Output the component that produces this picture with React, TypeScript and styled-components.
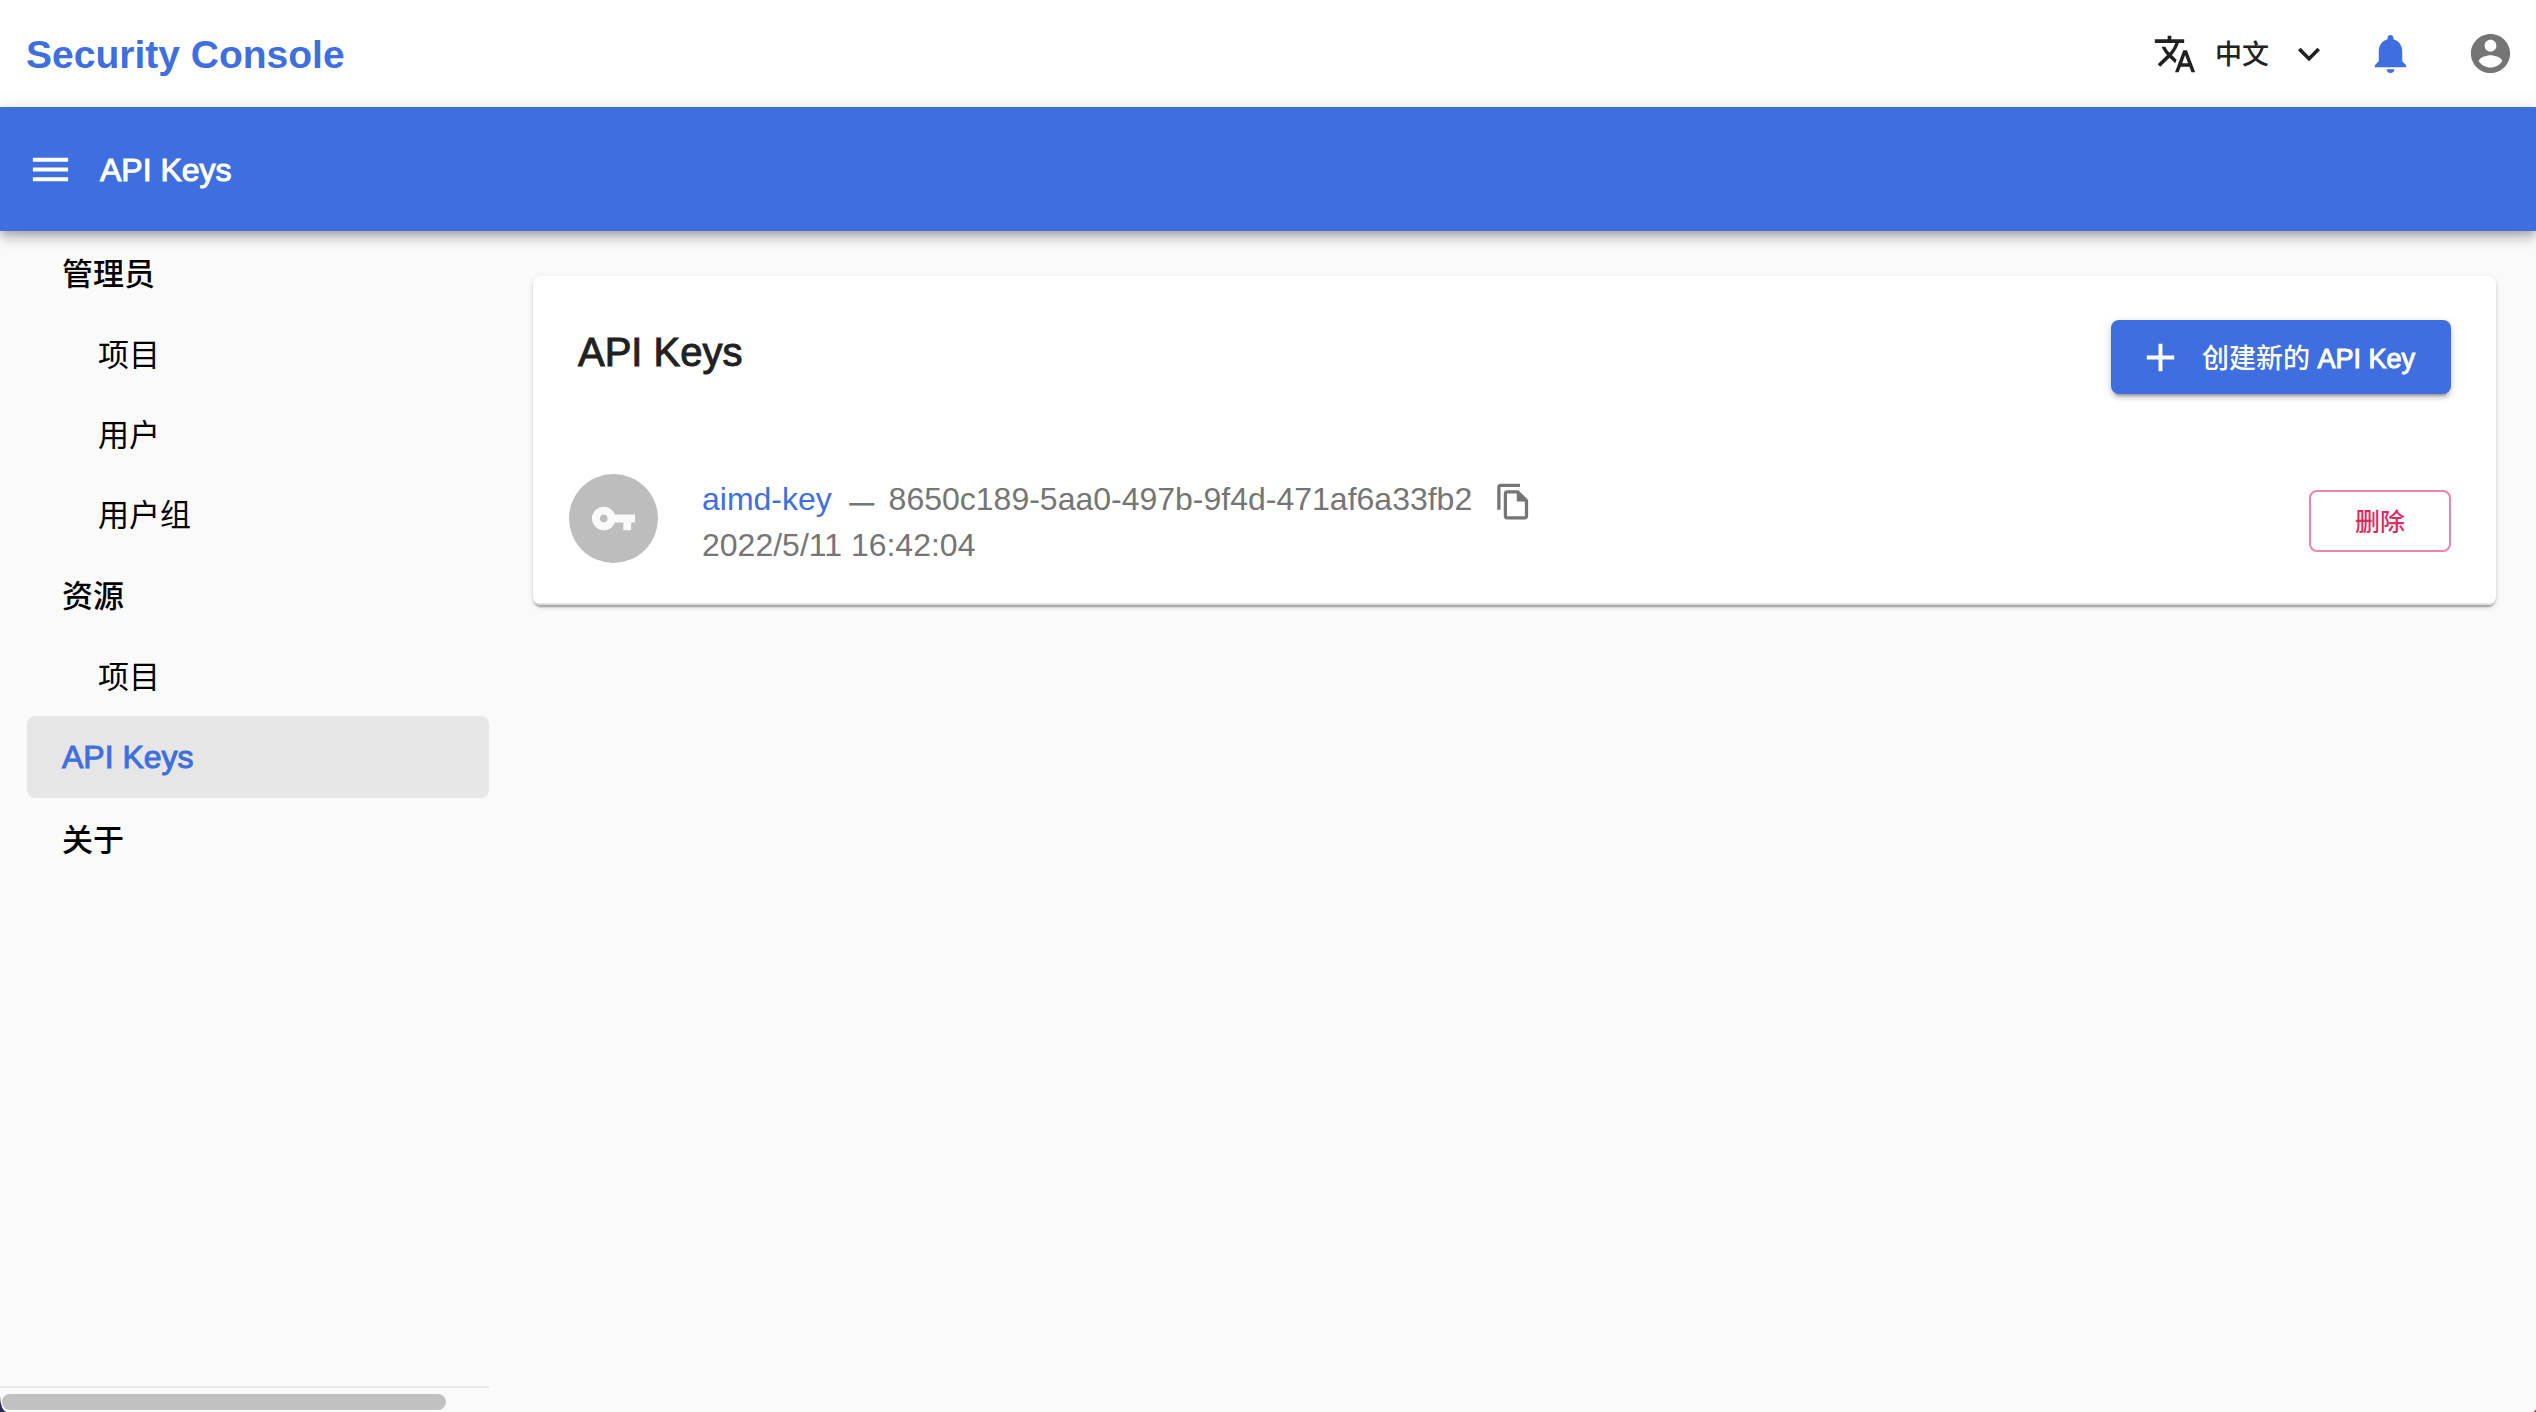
import React from "react";
import styled, { createGlobalStyle } from "styled-components";

const colors = {
  primary: "#3f6fde",
  danger: "#de2b5f",
  dangerBorder: "#ec87a8",
  page: "#fafafa",
  text: "#212121",
  muted: "#757575",
};

const GlobalStyle = createGlobalStyle`
  *, *::before, *::after { box-sizing: border-box; }
  body {
    margin: 0;
    background: linear-gradient(90deg, #2d2a55 50%, #7b2450 50%);
    font-family: "Liberation Sans", Helvetica, Arial, "Noto Sans CJK SC", sans-serif;
    color: ${colors.text};
  }
  button { font-family: inherit; cursor: pointer; }
  a { text-decoration: none; }
`;

const Page = styled.div`
  display: flex;
  flex-direction: column;
  min-height: 100vh;
  background: ${colors.page};
  border-bottom-left-radius: 7px 16px;
  border-bottom-right-radius: 4px;
  overflow: hidden;
`;

const Header = styled.header`
  display: flex;
  align-items: center;
  justify-content: space-between;
  height: 107px;
  padding: 0 22px 0 26px;
  background: #fff;
`;

const Brand = styled.a`
  padding-top: 2px;
  color: ${colors.primary};
  font-size: 39px;
  font-weight: 700;
  line-height: 64px;
`;

const HeaderActions = styled.div`
  display: flex;
  align-items: center;
`;

const LanguageButton = styled.button`
  display: flex;
  align-items: center;
  gap: 18px;
  margin-right: 36px;
  padding: 0;
  border: 0;
  background: none;
  color: ${colors.text};
  font-size: 27px;
  font-weight: 500;
  line-height: 46px;
`;

const LanguageLabel = styled.span`
  padding-top: 2px;
`;

const IconButton = styled.button<{ $color: string; $end?: number }>`
  display: flex;
  margin-right: ${(p) => p.$end ?? 0}px;
  padding: 0;
  border: 0;
  background: none;
  color: ${(p) => p.$color};
`;

const Svg = styled.svg<{ $size: number }>`
  display: block;
  flex: none;
  width: ${(p) => p.$size}px;
  height: ${(p) => p.$size}px;
  fill: currentColor;
`;

const AppBar = styled.div`
  position: relative;
  z-index: 1;
  display: flex;
  align-items: center;
  gap: 26px;
  height: 124px;
  padding: 0 27px;
  background: ${colors.primary};
  color: #fff;
  box-shadow: 0 4px 8px -2px rgba(0, 0, 0, 0.2), 0 8px 10px 0 rgba(0, 0, 0, 0.14),
    0 2px 20px 0 rgba(0, 0, 0, 0.12);
`;

const BarTitle = styled.h1`
  margin: 0;
  padding-top: 2px;
  font-size: 32px;
  font-weight: 500;
  line-height: 46px;
  -webkit-text-stroke: 1px currentColor;
`;

const Body = styled.div`
  display: flex;
  flex: 1;
`;

const Sidebar = styled.aside`
  display: flex;
  flex-direction: column;
  justify-content: space-between;
  flex: none;
  width: 489px;
`;

const Nav = styled.nav`
  display: flex;
  flex-direction: column;
  padding: 1px 0 0 27px;
`;

const TopLink = styled.a<{ $active?: boolean }>`
  display: flex;
  align-items: center;
  height: 82px;
  padding: ${(p) => (p.$active ? "0 0 0 35px" : "0 0 4px 35px")};
  border-radius: 8px;
  background: ${(p) => (p.$active ? "#e6e6e6" : "transparent")};
  color: ${(p) => (p.$active ? colors.primary : "#000")};
  font-size: ${(p) => (p.$active ? 32 : 31)}px;
  font-weight: 500;
  -webkit-text-stroke: ${(p) => (p.$active ? "1px currentColor" : "0")};
`;

const SubLink = styled.a`
  display: flex;
  align-items: center;
  height: 80px;
  padding: 0 0 4px 71px;
  color: #000;
  font-size: 31px;
  font-weight: 400;
`;

const ScrollTrack = styled.div`
  padding: 6px 43px 2px 2px;
  border-top: 2px solid #e8e8e8;
`;

const ScrollThumb = styled.div`
  height: 16px;
  border-radius: 8px;
  background: #c1c1c1;
`;

const Main = styled.main`
  flex: 1;
  min-width: 0;
  padding: 45px 40px 45px 44px;
`;

const Card = styled.section`
  border-radius: 8px;
  background: #fff;
  overflow: hidden;
  box-shadow: 0 4px 2px -2px rgba(0, 0, 0, 0.2), 0 2px 2px 0 rgba(0, 0, 0, 0.14),
    0 2px 6px 0 rgba(0, 0, 0, 0.12);
`;

const CardHeader = styled.div`
  display: flex;
  align-items: flex-start;
  justify-content: space-between;
  padding: 44px 45px 45px;
`;

const CardTitle = styled.h2`
  margin: 0;
  font-size: 40px;
  font-weight: 500;
  line-height: 64px;
  -webkit-text-stroke: 1px currentColor;
`;

const CreateButton = styled.button`
  display: flex;
  align-items: center;
  gap: 18px;
  height: 74px;
  padding: 0 36px 0 26px;
  border: 0;
  border-radius: 8px;
  background: ${colors.primary};
  color: #fff;
  font-size: 27px;
  font-weight: 500;
  box-shadow: 0 6px 2px -4px rgba(0, 0, 0, 0.2), 0 4px 4px 0 rgba(0, 0, 0, 0.14),
    0 2px 10px 0 rgba(0, 0, 0, 0.12);
`;

const CreateLabel = styled.span`
  padding-bottom: 2px;
`;

const Latin = styled.span`
  -webkit-text-stroke: 1px currentColor;
`;

const KeyList = styled.ul`
  margin: 0;
  padding: 0;
  list-style: none;
`;

const KeyItem = styled.li`
  display: flex;
  align-items: flex-start;
  padding: 35px 45px 35px 36px;
  border-bottom: 2px solid #e0e0e0;
`;

const Avatar = styled.div`
  display: flex;
  align-items: center;
  justify-content: center;
  flex: none;
  width: 89px;
  height: 89px;
  margin-right: 44px;
  border-radius: 50%;
  background: #bdbdbd;
  color: ${colors.page};
`;

const KeyText = styled.div`
  flex: 1;
  margin-top: 2px;
  color: ${colors.muted};
  font-size: 32px;
  line-height: 46px;
`;

const KeyLine = styled.div`
  height: 46px;
`;

const KeyName = styled.a`
  color: ${colors.primary};
`;

const Dash = styled.span`
  margin: 0 6px 0 9px;
  font-size: 24px;
  line-height: 1;
  -webkit-text-stroke: 1px currentColor;
`;

const CopyButton = styled.button`
  display: inline-block;
  margin-left: 22px;
  padding: 0;
  border: 0;
  background: none;
  color: inherit;
  vertical-align: middle;
`;

const DeleteButton = styled.button`
  align-self: center;
  width: 142px;
  height: 62px;
  padding: 0 0 2px;
  border: 2px solid ${colors.dangerBorder};
  border-radius: 8px;
  background: none;
  color: ${colors.danger};
  font-size: 25px;
  font-weight: 500;
`;

const paths = {
  translate:
    "M12.87 15.07l-2.54-2.51.03-.03c1.74-1.94 2.98-4.17 3.71-6.53H17V4h-7V2H8v2H1v1.99h11.17C11.5 7.92 10.44 9.75 9 11.35 8.07 10.32 7.3 9.19 6.69 8h-2c.73 1.63 1.73 3.17 2.98 4.56l-5.09 5.02L4 19l5-5 3.11 3.11.76-2.04zM18.5 10h-2L12 22h2l1.12-3h4.75L21 22h2l-4.5-12zm-2.62 7l1.62-4.33L19.12 17h-3.24z",
  expand: "M7.41 8.59L12 13.17l4.59-4.58L18 10l-6 6-6-6z",
  bell: "M12 22c1.1 0 2-.9 2-2h-4c0 1.1.89 2 2 2zm6-6v-5c0-3.07-1.64-5.64-4.5-6.32V4c0-.83-.67-1.5-1.5-1.5s-1.5.67-1.5 1.5v.68C7.63 5.36 6 7.92 6 11v5l-2 2v1h16v-1l-2-2z",
  account:
    "M12 2C6.48 2 2 6.48 2 12s4.48 10 10 10 10-4.48 10-10S17.52 2 12 2zm0 3c1.66 0 3 1.34 3 3s-1.34 3-3 3-3-1.34-3-3 1.34-3 3-3zm0 14.2c-2.5 0-4.71-1.28-6-3.22.03-1.99 4-3.08 6-3.08 1.99 0 5.97 1.09 6 3.08-1.29 1.94-3.5 3.22-6 3.22z",
  menu: "M3 18h18v-2H3v2zm0-5h18v-2H3v2zm0-7v2h18V6H3z",
  add: "M19 13h-6v6h-2v-6H5v-2h6V5h2v6h6v2z",
  key: "M12.65 10C11.83 7.67 9.61 6 7 6c-3.31 0-6 2.69-6 6s2.69 6 6 6c2.61 0 4.83-1.67 5.65-4H17v4h4v-4h2v-4H12.65zM7 14c-1.1 0-2-.9-2-2s.9-2 2-2 2 .9 2 2-.9 2-2 2z",
  copy: "M16 1H4c-1.1 0-2 .9-2 2v14h2V3h12V1zm-1 4H8c-1.1 0-1.99.9-1.99 2L6 21c0 1.1.89 2 1.99 2H19c1.1 0 2-.9 2-2V11l-6-6zM8 21V7h6v5h5v9H8z",
};

function Icon({ name, size = 47 }: { name: keyof typeof paths; size?: number }) {
  return (
    <Svg $size={size} viewBox="0 0 24 24" aria-hidden="true">
      <path d={paths[name]} />
    </Svg>
  );
}

type NavEntry = { label: string; active?: boolean; children?: string[] };

const navigation: NavEntry[] = [
  { label: "管理员", children: ["项目", "用户", "用户组"] },
  { label: "资源", children: ["项目"] },
  { label: "API Keys", active: true },
  { label: "关于" },
];

const apiKeys = [
  {
    name: "aimd-key",
    id: "8650c189-5aa0-497b-9f4d-471af6a33fb2",
    created: "2022/5/11 16:42:04",
  },
];

export default function App() {
  return (
    <Page>
      <GlobalStyle />
      <Header>
        <Brand href="#">Security Console</Brand>
        <HeaderActions>
          <LanguageButton type="button" aria-haspopup="menu">
            <Icon name="translate" size={44} />
            <LanguageLabel>中文</LanguageLabel>
            <Icon name="expand" size={44} />
          </LanguageButton>
          <IconButton type="button" aria-label="通知" $color={colors.primary} $end={53}>
            <Icon name="bell" />
          </IconButton>
          <IconButton type="button" aria-label="账户" $color={colors.muted}>
            <Icon name="account" />
          </IconButton>
        </HeaderActions>
      </Header>
      <AppBar>
        <IconButton type="button" aria-label="菜单" $color="#fff">
          <Icon name="menu" />
        </IconButton>
        <BarTitle>API Keys</BarTitle>
      </AppBar>
      <Body>
        <Sidebar>
          <Nav>
            {navigation.map((entry) => (
              <React.Fragment key={entry.label}>
                <TopLink
                  href="#"
                  $active={entry.active}
                  aria-current={entry.active ? "page" : undefined}
                >
                  {entry.label}
                </TopLink>
                {entry.children?.map((child) => (
                  <SubLink href="#" key={child}>
                    {child}
                  </SubLink>
                ))}
              </React.Fragment>
            ))}
          </Nav>
          <ScrollTrack aria-hidden="true">
            <ScrollThumb />
          </ScrollTrack>
        </Sidebar>
        <Main>
          <Card>
            <CardHeader>
              <CardTitle>API Keys</CardTitle>
              <CreateButton type="button">
                <Icon name="add" />
                <CreateLabel>
                  创建新的 <Latin>API Key</Latin>
                </CreateLabel>
              </CreateButton>
            </CardHeader>
            <KeyList>
              {apiKeys.map((item) => (
                <KeyItem key={item.id}>
                  <Avatar>
                    <Icon name="key" />
                  </Avatar>
                  <KeyText>
                    <KeyLine>
                      <KeyName href="#">{item.name}</KeyName> <Dash>—</Dash> {item.id}
                      <CopyButton type="button" aria-label="复制">
                        <Icon name="copy" size={39} />
                      </CopyButton>
                    </KeyLine>
                    <div>{item.created}</div>
                  </KeyText>
                  <DeleteButton type="button">删除</DeleteButton>
                </KeyItem>
              ))}
            </KeyList>
          </Card>
        </Main>
      </Body>
    </Page>
  );
}
